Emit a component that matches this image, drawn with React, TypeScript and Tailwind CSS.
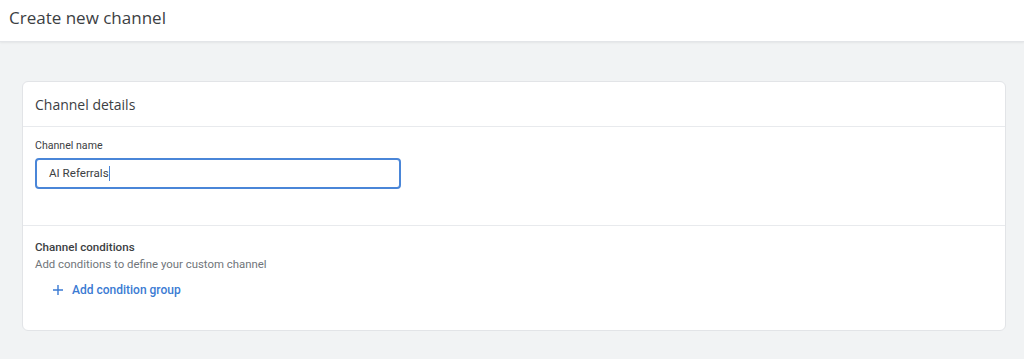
import React from "react";

export default function App() {
  return (
    <div className="w-[1024px] h-[359px] bg-[#f1f3f4] overflow-hidden" style={{ fontFamily: "Roboto, 'Open Sans', sans-serif" }}>
      <div className="h-[42px] bg-white border-b border-[#e3e5e8] shadow-[0_1px_2px_rgba(0,0,0,0.06)] flex items-center pl-[9px]">
        <h1 className="text-[17px] text-[#3c4043] leading-none -mt-[6px]" style={{ fontFamily: "'Open Sans', Roboto, sans-serif" }}>Create new channel</h1>
      </div>
      <div className="pt-[39px] pl-[22px] pr-[18px]">
        <div className="w-[984px] h-[250px] bg-white border border-[#e2e4e7] rounded-[6px] flex flex-col">
          <div className="h-[45px] border-b border-[#e8eaed] flex items-center pl-[12px]">
            <span className="text-[14px] text-[#3c4043] mt-[1px]" style={{ fontFamily: "'Open Sans', Roboto, sans-serif" }}>Channel details</span>
          </div>
          <div className="h-[99px] border-b border-[#e8eaed] pl-[12px] pt-[12px]">
            <div className="text-[10.6px] text-[#3c4043] leading-[14px]">Channel name</div>
            <div className="mt-[5px] w-[366px] h-[31px] border-2 border-[#4a86d8] rounded-[4px] flex items-center pl-[12px]">
              <span className="text-[11.6px] text-[#3c4043]">AI Referrals</span>
              <span className="w-px h-[15px] bg-[#4a86d8]"></span>
            </div>
          </div>
          <div className="pl-[12px] pt-[14px]">
            <div className="text-[11.6px] font-medium text-[#3c4043] leading-[15px]">Channel conditions</div>
            <div className="text-[11.4px] text-[#70757a] leading-[15px] mt-[2px]">Add conditions to define your custom channel</div>
            <div className="flex items-center mt-[9px] pl-[17px] text-[#3b7bd3]">
              <svg width="12" height="12" viewBox="0 0 12 12" className="mr-[8px]">
                <path d="M6 1v10M1 6h10" stroke="currentColor" strokeWidth="1.4" fill="none" />
              </svg>
              <span className="text-[12px] font-medium">Add condition group</span>
            </div>
          </div>
        </div>
      </div>
    </div>
  );
}
